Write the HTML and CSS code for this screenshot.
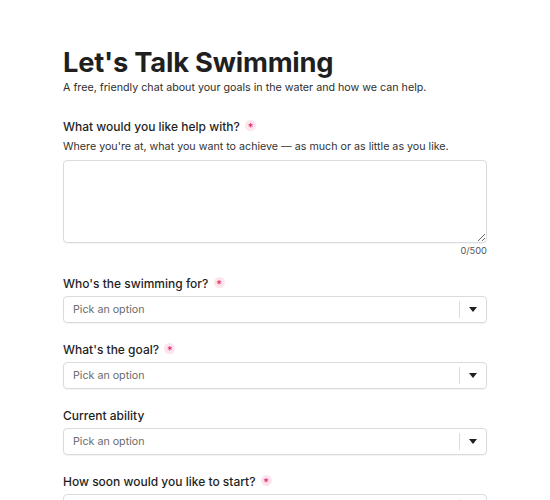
FILE: index.html
```html
<!DOCTYPE html>
<html lang="en">
  <head>
    <meta charset="UTF-8" />
    <meta name="viewport" content="width=device-width, initial-scale=1.0" />
    <title>Let's Talk Swimming</title>
    <link rel="stylesheet" href="styles.css">
  </head>
  <body>
    <div class="container">
      <h1>Let's Talk Swimming</h1>
      <p class="intro">A free, friendly chat about your goals in the water and how we can help.</p>

      <form id="enquiryForm">
        <!-- Free text -->
        <div class="field">
          <label for="helpText">What would you like help with? <span class="req">*</span></label>
          <p class="hint">Where you're at, what you want to achieve — as much or as little as you like.</p>
          <textarea id="helpText" name="help" maxlength="500"></textarea>
          <div class="counter" id="helpCount">0/500</div>
        </div>

        <!-- Dropdowns -->
        <div class="field">
          <label>Who's the swimming for? <span class="req">*</span></label>
          <div class="select">
            <span class="placeholder">Pick an option</span>
            <span class="sep"></span>
            <span class="caret"></span>
          </div>
        </div>

        <div class="field">
          <label>What's the goal? <span class="req">*</span></label>
          <div class="select">
            <span class="placeholder">Pick an option</span>
            <span class="sep"></span>
            <span class="caret"></span>
          </div>
        </div>

        <div class="field">
          <label>Current ability</label>
          <div class="select">
            <span class="placeholder">Pick an option</span>
            <span class="sep"></span>
            <span class="caret"></span>
          </div>
        </div>

        <div class="field">
          <label>How soon would you like to start? <span class="req">*</span></label>
          <div class="select">
            <span class="placeholder">Pick an option</span>
            <span class="sep"></span>
            <span class="caret"></span>
          </div>
        </div>
      </form>
    </div>

    <script>
      document
        .getElementById("helpText")
        .addEventListener("input", function (e) {
          document.getElementById("helpCount").innerText =
            e.target.value.length + "/500";
        });
    </script>
  </body>
</html>
```

FILE: styles.css
```css
body {
  font-family: Inter, "Noto Sans", sans-serif;
  background-color: white;
  color: #1f1f1f;
  margin: 0;
}

.container {
  max-width: 424px;
  margin: 0 auto;
  padding-top: 46px;
}

h1 {
  font-size: 27.3px;
  font-weight: 700;
  letter-spacing: -0.2px;
  margin: 0;
  line-height: 34px;
}

.intro {
  font-size: 10.7px;
  line-height: 15px;
  color: #2e2e2e;
  margin: 0 0 24px;
}

.field {
  margin-bottom: 19px;
}

label {
  display: block;
  font-size: 12px;
  font-weight: 500;
  line-height: 16px;
  margin-bottom: 4px;
}

.req {
  display: inline-block;
  width: 11px;
  height: 11px;
  line-height: 14px;
  text-align: center;
  border-radius: 50%;
  background-color: #fde4ed;
  color: #e3286d;
  font-size: 11px;
  margin-left: 2px;
}

.hint {
  font-size: 10.7px;
  line-height: 16px;
  color: #333;
  margin: 0 0 5px;
}

textarea {
  display: block;
  box-sizing: border-box;
  width: 100%;
  height: 83px;
  border: 1px solid #d9dbe0;
  border-radius: 4px;
  box-shadow: 0 1px 1px rgba(0, 0, 0, 0.04);
  font-family: inherit;
}

.counter {
  text-align: right;
  font-size: 9.3px;
  line-height: 12px;
  color: #555;
  margin-top: 2px;
}

.select {
  display: flex;
  align-items: center;
  box-sizing: border-box;
  height: 27px;
  border: 1px solid #d9dbe0;
  border-radius: 4px;
  box-shadow: 0 1px 1px rgba(0, 0, 0, 0.05);
  padding-left: 9px;
}

.placeholder {
  flex: 1;
  font-size: 10.7px;
  color: #6b6b6b;
}

.sep {
  width: 1px;
  height: 17px;
  background-color: #dcdcdc;
}

.caret {
  width: 0;
  height: 0;
  margin: 0 9px 0 9px;
  border-left: 4px solid transparent;
  border-right: 4px solid transparent;
  border-top: 5px solid #1f1f1f;
}
```
